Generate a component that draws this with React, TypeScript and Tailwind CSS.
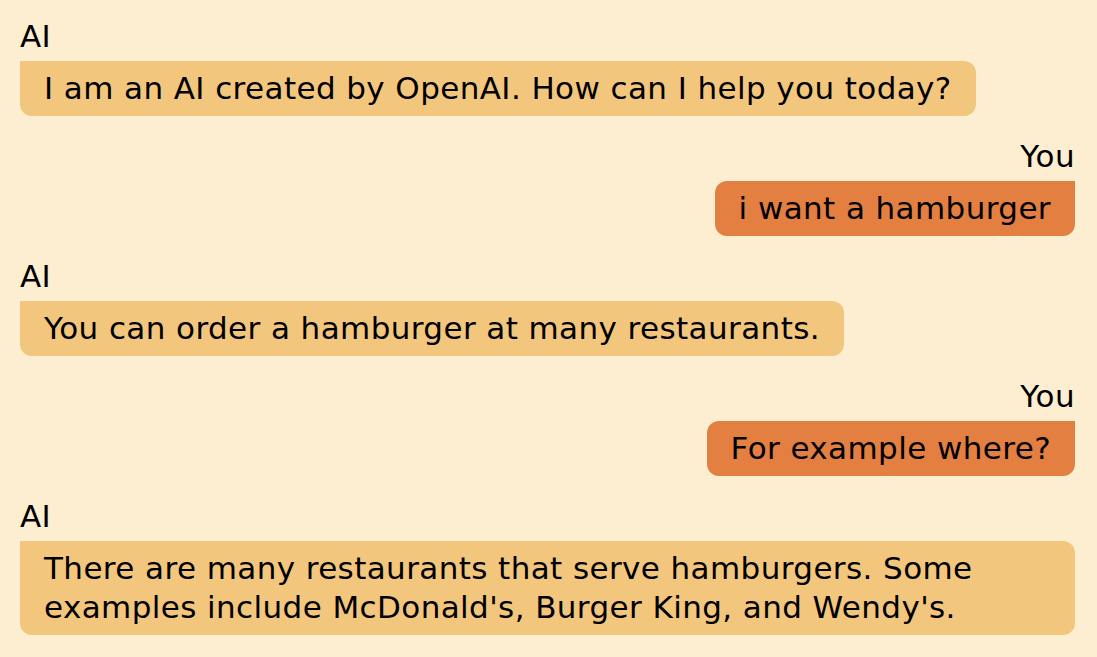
import React from 'react';

type Message = { role: 'AI' | 'You'; text: string };

const messages: Message[] = [
  { role: 'AI', text: 'I am an AI created by OpenAI. How can I help you today?' },
  { role: 'You', text: 'i want a hamburger' },
  { role: 'AI', text: 'You can order a hamburger at many restaurants.' },
  { role: 'You', text: 'For example where?' },
  {
    role: 'AI',
    text: "There are many restaurants that serve hamburgers. Some examples include McDonald's, Burger King, and Wendy's.",
  },
];

const App = () => {
  return (
    <div
      className="min-h-screen bg-[#fdeed1] text-black pl-5 pr-[22px] pt-[17px] text-[31px] leading-[39px] tracking-[0.4px]"
      style={{ fontFamily: '"DejaVu Sans", "Noto Sans CJK JP", sans-serif' }}
    >
      {messages.map((m, i) => (
        <div key={i} className={`flex flex-col mb-[21px] ${m.role === 'You' ? 'items-end' : 'items-start'}`}>
          <div className="mb-[5px]">{m.role}</div>
          {m.role === 'AI' ? (
            <div className="bg-[#f3c67d] rounded-[12px] rounded-tl-none py-2 pl-6 pr-6 max-w-full">{m.text}</div>
          ) : (
            <div className="bg-[#e37f41] rounded-[12px] rounded-tr-none py-2 px-6">{m.text}</div>
          )}
        </div>
      ))}
    </div>
  );
};

export default App;
